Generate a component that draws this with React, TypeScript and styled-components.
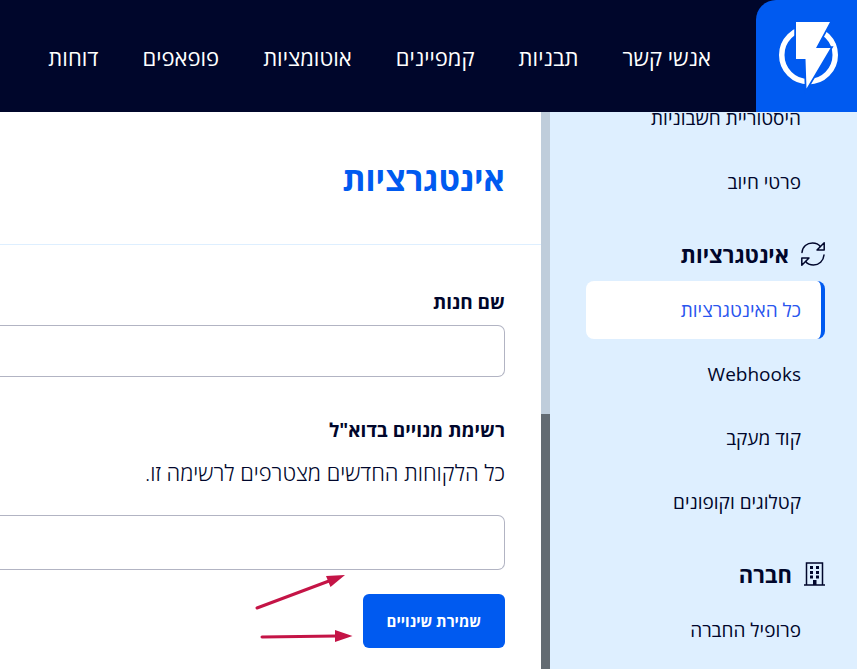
import React from "react";
import styled, { createGlobalStyle } from "styled-components";

const GlobalStyle = createGlobalStyle`
  *, *::before, *::after { box-sizing: border-box; }
  html, body { margin: 0; height: 100%; overflow: hidden; background: #fff; }
  #root { height: 100%; }
  body {
    color: #00062b;
    font-family: "Open Sans", "Noto Sans", "DejaVu Sans", sans-serif;
    font-weight: 400;
  }
`;

const Page = styled.div`
  display: flex;
  flex-direction: column;
  height: 100vh;
  padding-bottom: 2px;
`;

const Header = styled.header`
  display: flex;
  flex: none;
  align-items: stretch;
  height: 112px;
  background: #00062b;
`;

const Logo = styled.a`
  display: flex;
  flex: none;
  width: 101px;
  background: #005af0;
  border-top-left-radius: 20px;
`;

const Nav = styled.nav`
  display: flex;
  align-items: center;
  gap: 44px;
  padding: 2px 45px 0;
`;

const NavLink = styled.a`
  color: #fff;
  font-size: 22px;
  line-height: 32px;
  text-decoration: none;
  white-space: nowrap;
`;

const Body = styled.div`
  display: flex;
  flex: 1;
  min-height: 0;
`;

const Sidebar = styled.aside`
  display: flex;
  flex: none;
  flex-direction: column;
  justify-content: flex-end;
  width: 307px;
  padding: 0 32px 10px 36px;
  overflow: hidden;
  background: #deefff;
`;

const List = styled.ul`
  display: flex;
  flex: none;
  flex-direction: column;
  gap: 6px;
  margin: 0;
  padding: 0;
  list-style: none;
`;

const SideLink = styled.a<{ $active?: boolean }>`
  display: flex;
  align-items: center;
  height: 58px;
  padding-right: ${(p) => (p.$active ? 20 : 24)}px;
  border-right: ${(p) => (p.$active ? "4px solid #005af0" : "none")};
  border-radius: 8px;
  background: ${(p) => (p.$active ? "#fff" : "transparent")};
  color: ${(p) => (p.$active ? "#2a55ee" : "#00062b")};
  font-size: 19px;
  line-height: 28px;
  text-decoration: none;
  white-space: nowrap;
`;

const GroupTitle = styled.h2`
  display: flex;
  flex: none;
  align-items: center;
  gap: 12px;
  height: 70px;
  margin: 0;
  padding-top: 16px;
  font-size: 22px;
  font-weight: 700;
  line-height: 32px;
`;

const Scrollbar = styled.div`
  display: flex;
  flex: none;
  flex-direction: column;
  width: 9px;
`;

const Track = styled.div`
  flex: 302;
  background: #bfcddb;
`;

const Thumb = styled.div`
  flex: 255;
  background: #636b72;
`;

const Main = styled.main`
  position: relative;
  flex: 1;
  min-width: 0;
`;

const TitleBar = styled.div`
  display: flex;
  align-items: center;
  height: 133px;
  padding: 2px 36px 0 0;
  border-bottom: 1px solid #deefff;
`;

const Title = styled.h1`
  margin: 0;
  color: #005af0;
  font-size: 33px;
  font-weight: 700;
  line-height: 48px;
`;

const Form = styled.form`
  display: flex;
  flex-direction: column;
  align-items: flex-start;
  padding: 42px 36px 0 0;
`;

const Field = styled.div<{ $gap: number }>`
  width: 100%;
  margin-bottom: ${(p) => p.$gap}px;
`;

const Label = styled.label`
  display: block;
  margin-bottom: 8px;
  font-size: 19px;
  font-weight: 700;
  line-height: 30px;
`;

const Hint = styled.p`
  margin: 0 0 24px;
  font-size: 22px;
  font-weight: 300;
  line-height: 38px;
`;

const TextBox = styled.input<{ $height: number }>`
  display: block;
  width: 100%;
  height: ${(p) => p.$height}px;
  margin: 0;
  padding: 0 16px;
  border: 1px solid #b2b4c3;
  border-left: none;
  border-radius: 0 7px 7px 0;
  background: #fff;
  color: inherit;
  font: inherit;
  font-size: 20px;
`;

const SaveButton = styled.button`
  height: 54px;
  padding: 0 24px;
  border: none;
  border-radius: 6px;
  background: #005af0;
  color: #fff;
  font-family: inherit;
  font-size: 15px;
  font-weight: 700;
  white-space: nowrap;
`;

const Arrows = styled.svg`
  position: absolute;
  top: 458px;
  right: 180px;
`;

const Bolt = () => (
  <svg width="101" height="112" viewBox="0 0 101 112" aria-hidden="true">
    <circle cx="52.500" cy="55" r="26.750" fill="none" stroke="#fff" strokeWidth="5.500" />
    <path d="M40 22H74L60 48H74.500L50.500 88.500L49.500 59H40Z" fill="#005af0" stroke="#005af0" strokeWidth="3.500" />
    <path d="M40 22H74L60 48H74.500L50.500 88.500L49.500 59H40Z" fill="#fff" />
  </svg>
);

const SyncIcon = () => (
  <svg width="24" height="24" viewBox="0 0 24 24" fill="none" stroke="#00062b" strokeWidth="1.500" strokeLinejoin="round" strokeLinecap="round" aria-hidden="true">
    <path d="M1 10.500C1.500 4.500 6 1 11.500 1C15 1 17.500 2 19.300 4.500" />
    <path d="M23.200 .8V8H16Z" />
    <path d="M23 13C22.500 19 18 23 12.500 23C9 23 6.500 22 4.700 19.500" />
    <path d="M.8 23.200V16H8Z" />
  </svg>
);

const BuildingIcon = () => (
  <svg width="21" height="24" viewBox="0 0 21 24" fill="#00062b" aria-hidden="true">
    <path d="M2.500 23V1H18.500V23M0 23H21" fill="none" stroke="#00062b" strokeWidth="1.500" />
    <path d="M6 4h3v3H6zM12 4h3v3h-3zM6 9h3v3H6zM12 9h3v3h-3zM6 13.500h3v3H6zM12 13.500h3v3h-3zM9 18h3.500v5H9z" />
  </svg>
);

const navItems = ["אנשי קשר", "תבניות", "קמפיינים", "אוטומציות", "פופאפים", "דוחות"];
const billing = ["היסטוריית חשבוניות", "פרטי חיוב"];
const integrations = ["כל האינטגרציות", "Webhooks", "קוד מעקב", "קטלוגים וקופונים"];
const company = ["פרופיל החברה"];

const Links = ({ items, active }: { items: string[]; active?: string }) => (
  <List>
    {items.map((text) => (
      <li key={text}>
        <SideLink href="#" $active={text === active}>{text}</SideLink>
      </li>
    ))}
  </List>
);

export default function App() {
  return (
    <Page dir="rtl" lang="he">
      <GlobalStyle />
      <Header>
        <Logo href="#" aria-label="דף הבית"><Bolt /></Logo>
        <Nav>
          {navItems.map((text) => <NavLink href="#" key={text}>{text}</NavLink>)}
        </Nav>
      </Header>
      <Body>
        <Sidebar>
          <Links items={billing} />
          <GroupTitle><SyncIcon />אינטגרציות</GroupTitle>
          <Links items={integrations} active="כל האינטגרציות" />
          <GroupTitle><BuildingIcon />חברה</GroupTitle>
          <Links items={company} />
        </Sidebar>
        <Scrollbar aria-hidden="true"><Track /><Thumb /></Scrollbar>
        <Main>
          <TitleBar><Title>אינטגרציות</Title></TitleBar>
          <Form onSubmit={(e) => e.preventDefault()}>
            <Field $gap={38}>
              <Label htmlFor="store">שם חנות</Label>
              <TextBox id="store" $height={52} />
            </Field>
            <Field $gap={24}>
              <Label htmlFor="list">רשימת מנויים בדוא"ל</Label>
              <Hint>כל הלקוחות החדשים מצטרפים לרשימה זו.</Hint>
              <TextBox id="list" $height={55} />
            </Field>
            <SaveButton type="submit">שמירת שינויים</SaveButton>
          </Form>
          <Arrows width="108" height="76" viewBox="0 0 108 76" fill="#c41446" stroke="#c41446" aria-hidden="true">
            <path d="M4 38L76 11" strokeWidth="3" strokeLinecap="round" />
            <path d="M92 5L73 6L77.500 17Z" stroke="none" />
            <path d="M9 67L84 66" strokeWidth="3" strokeLinecap="round" />
            <path d="M99.500 66L82 60V72Z" stroke="none" />
          </Arrows>
        </Main>
      </Body>
    </Page>
  );
}
